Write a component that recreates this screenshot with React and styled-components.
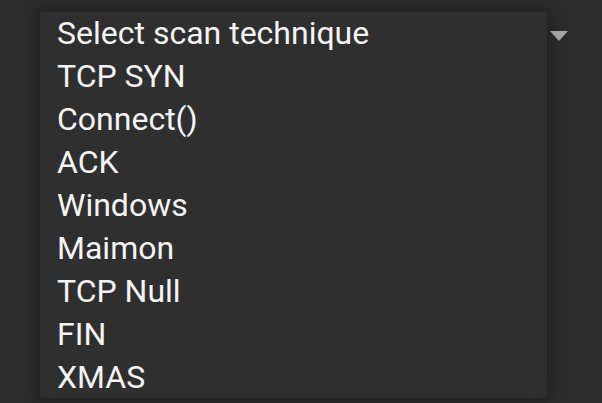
import React from "react";
import styled, { createGlobalStyle } from "styled-components";

const GlobalStyle = createGlobalStyle`
  html, body {
    margin: 0;
    padding: 0;
    background: #2b2b2b;
    font-family: Roboto, "Liberation Sans", sans-serif;
  }
`;

const options = [
  "TCP SYN",
  "Connect()",
  "ACK",
  "Windows",
  "Maimon",
  "TCP Null",
  "FIN",
  "XMAS",
];

let App = () => {
  return (
    <>
      <GlobalStyle />
      <Page>
        <Field>
          <ListBox>
            <Option>Select scan technique</Option>
            {options.map((opt) => (
              <Option key={opt}>{opt}</Option>
            ))}
          </ListBox>
          <Arrow />
        </Field>
      </Page>
    </>
  );
};

const Page = styled.div`
  width: 602px;
  height: 403px;
  overflow: hidden;
  padding: 12px 0 0 40px;
  box-sizing: border-box;
`;

const Field = styled.div`
  display: flex;
  align-items: flex-start;
`;

const ListBox = styled.ul`
  list-style: none;
  margin: 0;
  padding: 0 0 0 17px;
  width: 507px;
  height: 386px;
  box-sizing: border-box;
  background: #2f2f2f;
  border-radius: 4px;
  box-shadow: 0 0 14px 4px rgba(0, 0, 0, 0.22);
`;

const Option = styled.li`
  color: #f4f4f4;
  font-size: 32px;
  font-weight: 400;
  line-height: 43px;
  height: 43px;
  white-space: nowrap;
`;

const Arrow = styled.div`
  margin: 19px 0 0 3px;
  width: 0;
  height: 0;
  border-left: 9px solid transparent;
  border-right: 9px solid transparent;
  border-top: 10px solid #a3a3a3;
`;

export default App;
